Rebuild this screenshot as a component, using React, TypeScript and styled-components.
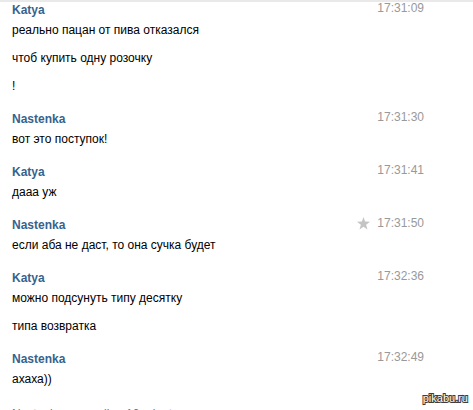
import React from "react";
import styled, { createGlobalStyle } from "styled-components";

const GlobalStyle = createGlobalStyle`
  body {
    margin: 0;
    background: #ffffff;
    font-family: "Liberation Sans", Arial, sans-serif;
    font-size: 12px;
    color: #000000;
  }
`;

const Page = styled.main`
  position: relative;
  box-sizing: border-box;
  height: 100vh;
  overflow: hidden;
  border-top: 2px solid #e9e9e9;
  padding: 0 49px 0 12px;
`;

const Message = styled.article`
  display: grid;
  grid-template-columns: 1fr auto;
  padding-bottom: 12px;
`;

const Author = styled.a`
  justify-self: start;
  line-height: 16px;
  font-weight: bold;
  color: #36638e;
  text-decoration: none;
`;

const Meta = styled.div`
  display: flex;
  align-items: center;
  gap: 7px;
  height: 12px;
  color: #999999;
`;

const StarButton = styled.button`
  display: flex;
  padding: 0;
  border: 0;
  background: none;
  color: #c4c4c4;
`;

const Lines = styled.div`
  display: grid;
  grid-column: 1 / -1;
  gap: 3px;
`;

const Line = styled.p`
  margin: 0;
  line-height: 25px;
`;

const Status = styled.p`
  margin: 0;
  padding-top: 2px;
  line-height: 16px;
  color: #777777;
`;

const Watermark = styled.span`
  position: absolute;
  right: 5px;
  bottom: 4px;
  font-size: 11px;
  line-height: 16px;
  color: #ffffff;
  -webkit-text-stroke: 2px #3c3c3c;
  paint-order: stroke fill;
`;

interface Entry {
  author: string;
  time: string;
  lines: string[];
  starred?: boolean;
}

const entries: Entry[] = [
  {
    author: "Katya",
    time: "17:31:09",
    lines: ["реально пацан от пива отказался", "чтоб купить одну розочку", "!"],
  },
  { author: "Nastenka", time: "17:31:30", lines: ["вот это поступок!"] },
  { author: "Katya", time: "17:31:41", lines: ["дааа уж"] },
  {
    author: "Nastenka",
    time: "17:31:50",
    lines: ["если аба не даст, то она сучка будет"],
    starred: true,
  },
  {
    author: "Katya",
    time: "17:32:36",
    lines: ["можно подсунуть типу десятку", "типа возвратка"],
  },
  { author: "Nastenka", time: "17:32:49", lines: ["ахаха))"] },
];

const Star = () => (
  <svg width="13" height="13" viewBox="0 0 13 13" fill="currentColor" aria-hidden="true">
    <path d="M6.5 0 8.1 4.6 13 4.7 9.1 7.7 10.5 12.5 6.5 9.7 2.5 12.5 3.9 7.7 0 4.7 4.9 4.6Z" />
  </svg>
);

export default function App() {
  return (
    <>
      <GlobalStyle />
      <Page>
        {entries.map((entry) => (
          <Message key={entry.time}>
            <Author href="#">{entry.author}</Author>
            <Meta>
              {entry.starred && (
                <StarButton type="button" aria-label="Important">
                  <Star />
                </StarButton>
              )}
              <time>{entry.time}</time>
            </Meta>
            <Lines>
              {entry.lines.map((line) => (
                <Line key={line}>{line}</Line>
              ))}
            </Lines>
          </Message>
        ))}
        <Status>Nastenka was online 10 minutes ago</Status>
        <Watermark>pikabu.ru</Watermark>
      </Page>
    </>
  );
}
